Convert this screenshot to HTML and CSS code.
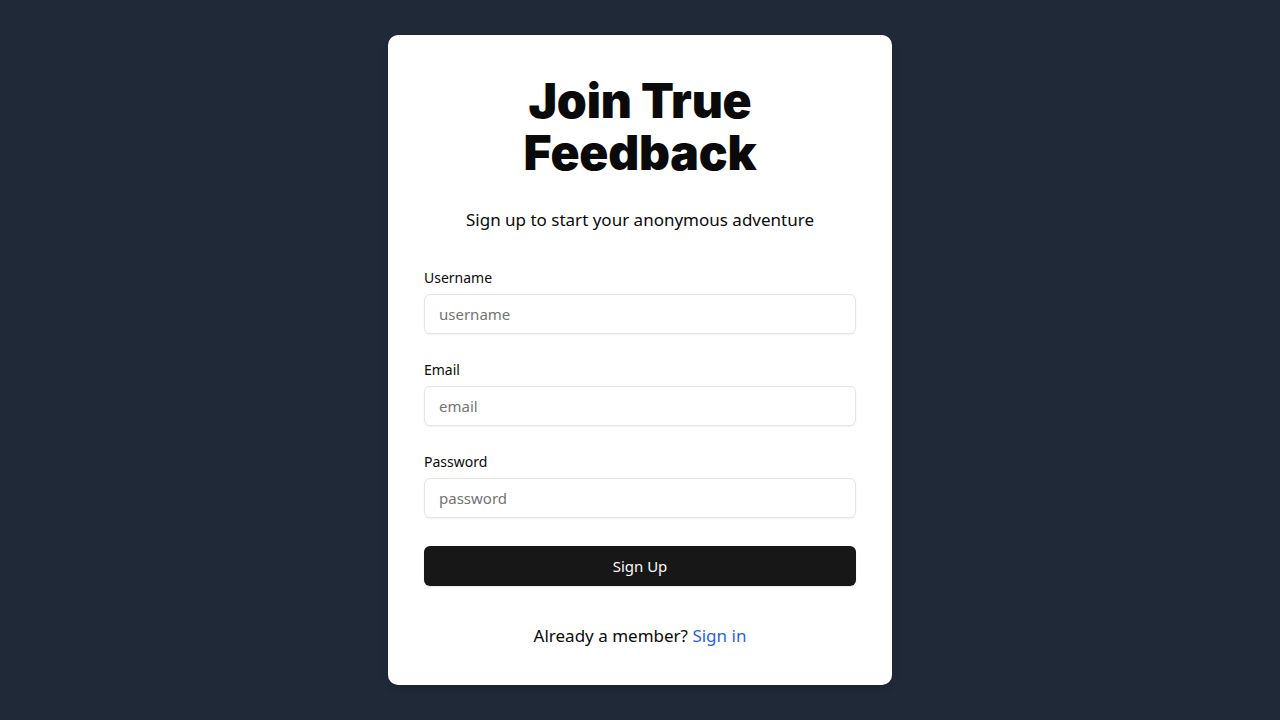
FILE: index.html
```html
<!DOCTYPE html>
<html lang="en">
<head>
    <meta charset="UTF-8">
    <meta name="viewport" content="width=device-width, initial-scale=1.0">
    <title>Sign Up - True Feedback</title>
    <link rel="stylesheet" href="styles.css">
</head>
<body>
    <div class="card">
        <div class="card-header">
            <h1>Join True<br>Feedback</h1>
            <p class="subtitle">Sign up to start your anonymous adventure</p>
        </div>
        <form class="signup-form" onsubmit="return false;">
            <div class="field">
                <label for="username">Username</label>
                <input type="text" id="username" placeholder="username">
            </div>
            <div class="field">
                <label for="email">Email</label>
                <input type="email" id="email" placeholder="email">
            </div>
            <div class="field">
                <label for="password">Password</label>
                <input type="password" id="password" placeholder="password">
            </div>
            <button type="submit">Sign Up</button>
        </form>
        <p class="footer-text">Already a member? <a href="#">Sign in</a></p>
    </div>
</body>
</html>
```

FILE: styles.css
```css
* {
    box-sizing: border-box;
}
body {
    margin: 0;
    min-height: 100vh;
    display: flex;
    align-items: center;
    justify-content: center;
    background-color: #1f2937;
    font-family: "Noto Sans", "Open Sans", sans-serif;
    color: #0a0a0a;
}
.card {
    width: 504px;
    height: 650px;
    padding: 40px 36px 36px;
    background-color: #ffffff;
    border-radius: 10px;
    box-shadow: 0 4px 6px rgba(0, 0, 0, 0.1);
}
.card-header {
    text-align: center;
}
h1 {
    margin: 0;
    font-family: Inter, "Noto Sans", sans-serif;
    font-size: 48px;
    line-height: 52px;
    font-weight: 900;
    letter-spacing: -0.2px;
}
.subtitle {
    margin: 27px 0 0;
    font-size: 17px;
    line-height: 28px;
}
.signup-form {
    margin-top: 34px;
}
.field {
    margin-bottom: 26px;
}
label {
    display: block;
    margin-bottom: 6px;
    font-size: 14px;
    line-height: 20px;
    font-weight: 400;
}
input {
    display: block;
    width: 100%;
    height: 40px;
    padding: 0 14px;
    border: 1px solid #e5e5e5;
    border-radius: 6px;
    box-shadow: 0 1px 2px rgba(0, 0, 0, 0.05);
    font-family: inherit;
    font-size: 15px;
    color: #0a0a0a;
    outline: none;
}
input::placeholder {
    color: #737373;
}
button {
    display: block;
    width: 100%;
    height: 40px;
    margin-top: 28px;
    border: none;
    border-radius: 6px;
    background-color: #171717;
    color: #fafafa;
    font-family: inherit;
    font-size: 15px;
    box-shadow: 0 1px 2px rgba(0, 0, 0, 0.1);
    cursor: pointer;
}
button:hover {
    background-color: #262626;
}
.footer-text {
    margin: 38px 0 0;
    text-align: center;
    font-size: 17px;
    line-height: 24px;
}
.footer-text a {
    color: #2563eb;
    text-decoration: none;
}
.footer-text a:hover {
    color: #1d4ed8;
}
```
